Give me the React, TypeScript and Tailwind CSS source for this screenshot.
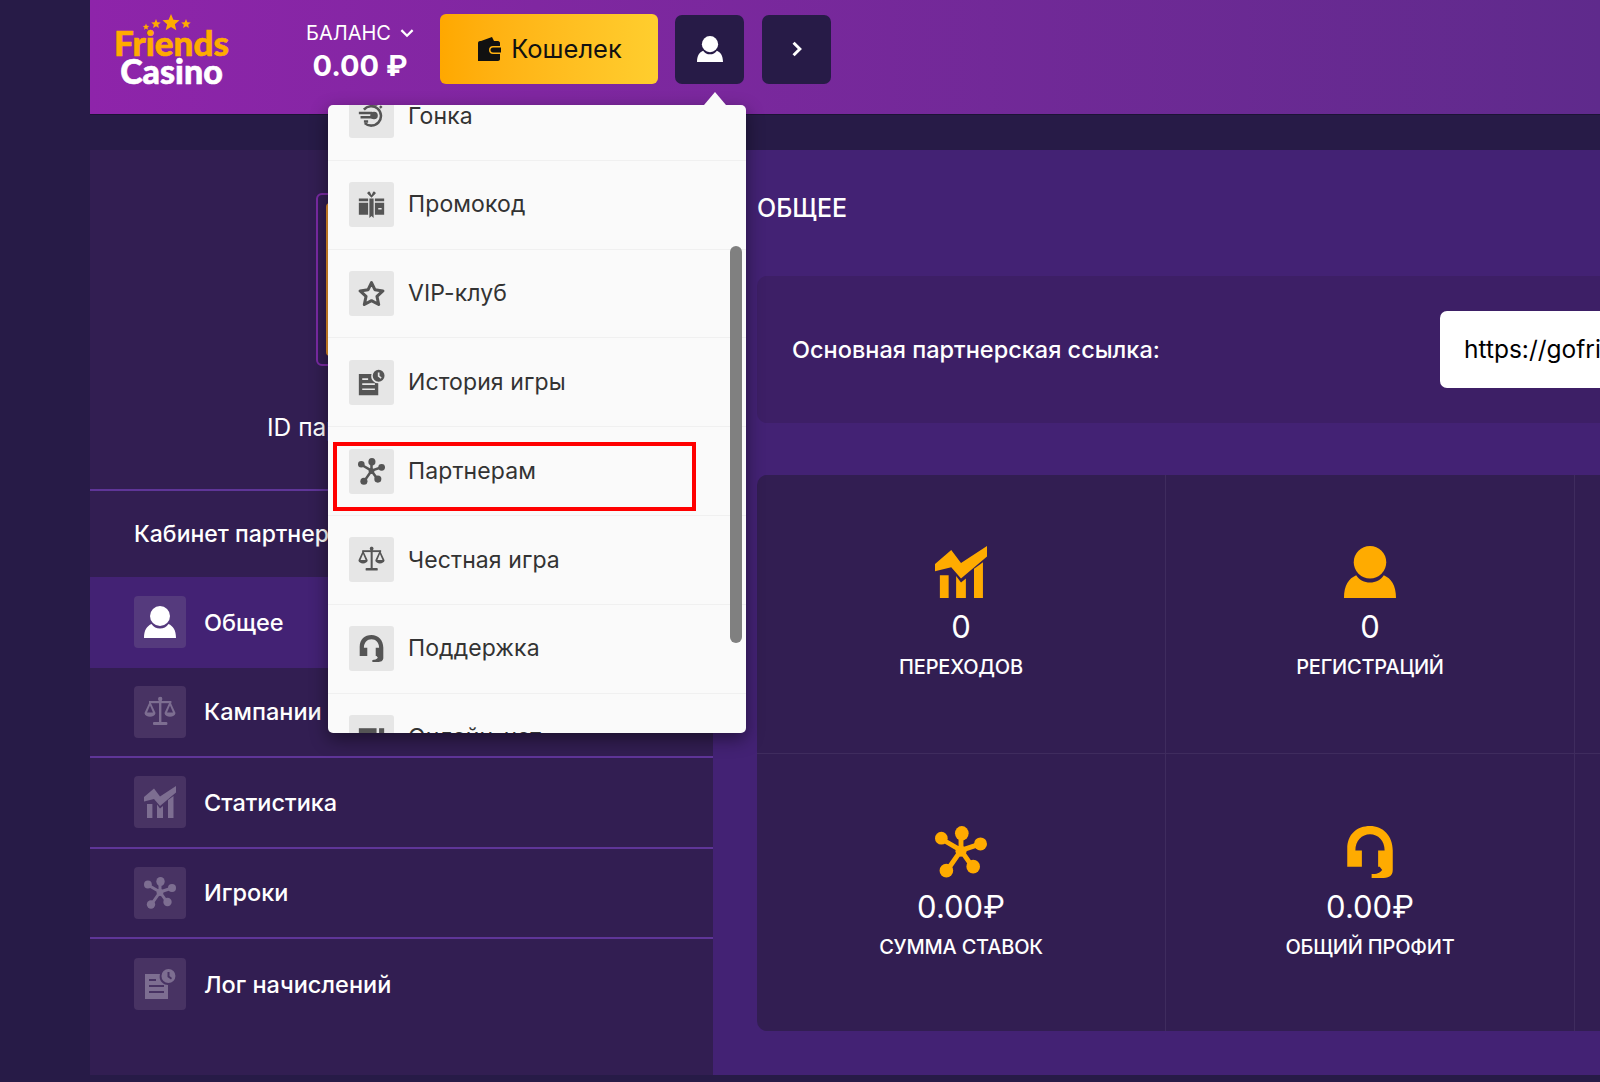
import React from "react";

const F = '"Inter","Liberation Sans",sans-serif';
const LOGO = '"Lato",sans-serif';

function Chart({ className = "" }: { className?: string }) {
  return (
    <svg viewBox="0 0 32 32" className={className} fill="currentColor">
      <path d="M0 15.5 L0 11 L10 2.5 L16 10.5 L32 0 L32 6.5 L16 20 L10 13 Z" />
      <rect x="3" y="18" width="5.4" height="14" />
      <path d="M13 18.5 L16 22.5 L19 20 L19 32 L13 32 Z" />
      <path d="M24 14 L29.5 10 L29.5 32 L24 32 Z" />
    </svg>
  );
}
function User({ className = "" }: { className?: string }) {
  return (
    <svg viewBox="0 0 32 32" className={className} fill="currentColor">
      <ellipse cx="16" cy="10" rx="10" ry="10" />
      <path d="M0 32 C0 24 3 20 7.5 18 C9.5 21 12.5 22.5 16 22.5 C19.5 22.5 22.5 21 24.5 18 C29 20 32 24 32 32 Z" />
    </svg>
  );
}
function Hub({ className = "" }: { className?: string }) {
  return (
    <svg viewBox="0 0 32 32" className={className} fill="currentColor" stroke="currentColor">
      <g strokeWidth="3">
        <path d="M16 15 L16 4 M16 15 L4 8 M16 15 L28 11 M16 15 L7 28 M16 15 L23 25" fill="none" />
      </g>
      <g stroke="none">
        <circle cx="16" cy="15.5" r="3.4" />
        <ellipse cx="16.5" cy="4.5" rx="4.2" ry="4.5" />
        <circle cx="3.9" cy="7.5" r="3.9" />
        <circle cx="28" cy="11" r="4" />
        <circle cx="7" cy="27.5" r="4.2" />
        <circle cx="23.5" cy="25" r="4.2" />
      </g>
    </svg>
  );
}
function Headset({ className = "" }: { className?: string }) {
  return (
    <svg viewBox="0 0 32 32" className={className} fill="currentColor">
      <path d="M2 25 L2 14 C2 5 8 0 16 0 C24 0 30 6 30 15 L30 27 C30 31 27 32 23 32 L17 32 L17 29.5 C20 29.5 22 29 23.5 27 L22 25 L21 25 L21 15 L25 15 C25 9 21 5 16 5 C11 5 7 9 7 15 L11 15 L11 25 Z" />
    </svg>
  );
}
function Scales({ className = "" }: { className?: string }) {
  return (
    <svg viewBox="0 0 32 32" className={className} fill="currentColor">
      <rect x="15" y="1" width="2.4" height="26" />
      <rect x="9" y="26" width="14.4" height="3" rx="1" />
      <rect x="5" y="5" width="22.4" height="2.2" />
      <circle cx="16.2" cy="3" r="2.2" />
      <path d="M0.5 17 L6 5 L11.5 17 C11 22 1 22 0.5 17 Z M3 16.5 L9 16.5 L6 9.5 Z" fillRule="evenodd" />
      <path d="M20.5 17 L26 5 L31.5 17 C31 22 21 22 20.5 17 Z M23 16.5 L29 16.5 L26 9.5 Z" fillRule="evenodd" />
    </svg>
  );
}
function LogDoc({ className = "" }: { className?: string }) {
  return (
    <svg viewBox="0 0 32 32" className={className} fill="currentColor">
      <path d="M1 6 L16 6 C15 10 16 14 21 16.5 L24 17 L24 31 L1 31 Z M5 11 L5 13 L12 13 L12 11 Z M5 17 L5 19 L20 19 L20 17 Z M5 23 L5 25 L20 25 L20 23 Z" fillRule="evenodd" />
      <path d="M24.5 1 A7 7 0 1 1 24.4 15 A7 7 0 1 1 24.5 1 Z M23.5 4 L23.5 9 L27 11.5 L28 10 L25.5 8 L25.5 4 Z" fillRule="evenodd" />
    </svg>
  );
}
function Gift({ className = "" }: { className?: string }) {
  return (
    <svg viewBox="0 0 32 32" className={className} fill="currentColor">
      <path d="M1 9 L12 9 L12 12 L1 12 Z M1 14 L12 14 L12 28 L1 28 Z M20 9 L31 9 L31 12 L20 12 Z M20 14 L31 14 L31 28 L20 28 Z M24 20 L24 22 L28 22 L28 20 Z" fillRule="evenodd" />
      <path d="M13.5 9 L18.5 9 L18.5 32 L16 29.5 L13.5 32 Z" />
      <path d="M16 8 L11 3 A2 2 0 0 1 14 1 L16 5 L18 1 A2 2 0 0 1 21 3 Z" />
    </svg>
  );
}
function Race({ className = "" }: { className?: string }) {
  return (
    <svg viewBox="0 0 32 32" className={className} fill="none" stroke="currentColor" strokeWidth="3">
      <path d="M7 9 A11.5 11.5 0 1 1 8 25" />
      <path d="M1 13 L17 13 M3 18 L17 18 M7 23 L12 23" />
      <circle cx="19" cy="16" r="3" fill="currentColor" />
      <path d="M15 3 L23 3 M26 5 L28 7" />
    </svg>
  );
}
function StarO({ className = "" }: { className?: string }) {
  return (
    <svg viewBox="0 0 32 32" className={className} fill="none" stroke="currentColor" strokeWidth="3.6" strokeLinejoin="round">
      <path d="M16 3 L20 11.5 L29.5 13 L22.5 19.5 L24.5 29 L16 24.5 L7.5 29 L9.5 19.5 L2.5 13 L12 11.5 Z" />
    </svg>
  );
}
function Chat({ className = "" }: { className?: string }) {
  return (
    <svg viewBox="0 0 32 32" className={className} fill="currentColor">
      <rect x="1" y="5" width="21" height="22" />
      <rect x="25" y="5" width="6" height="22" />
    </svg>
  );
}
function Wallet({ className = "" }: { className?: string }) {
  return (
    <svg viewBox="0 0 26 26" className={className} fill="currentColor">
      <path d="M5 5 L16 1 L18 5 Z" />
      <path d="M2 7 C2 5.8 3 5 4 5 L22 5 C23 5 24 6 24 7 L24 10 L17 10 C14.5 10 13 11.5 13 14 C13 16.5 14.5 18 17 18 L24 18 L24 23 C24 24 23 25 22 25 L2 25 Z" />
      <path d="M17 11.5 L25 11.5 L25 16.5 L17 16.5 C15.5 16.5 14.5 15.5 14.5 14 C14.5 12.5 15.5 11.5 17 11.5 Z" />
    </svg>
  );
}
function LogoStars({ className = "" }: { className?: string }) {
  const star = (cx: number, cy: number, r: number) => {
    const pts: string[] = [];
    for (let i = 0; i < 10; i++) {
      const a = -Math.PI / 2 + (i * Math.PI) / 5;
      const rr = i % 2 === 0 ? r : r * 0.45;
      pts.push(`${cx + rr * Math.cos(a)},${cy + rr * Math.sin(a)}`);
    }
    return <polygon key={`${cx}`} points={pts.join(" ")} />;
  };
  return (
    <svg viewBox="0 0 60 18" className={className} fill="currentColor">
      {star(4, 13, 3.4)}
      {star(14, 10, 5)}
      {star(29, 9, 9)}
      {star(44, 10, 5)}
    </svg>
  );
}

const menu = [
  { t: "Промокод", I: Gift },
  { t: "VIP-клуб", I: StarO },
  { t: "История игры", I: LogDoc },
  { t: "Партнерам", I: Hub },
  { t: "Честная игра", I: Scales },
  { t: "Поддержка", I: Headset },
];

function MenuRow({ t, I }: { t: string; I: React.ComponentType<{ className?: string }> }) {
  return (
    <div className="h-[88.8px] shrink-0 flex items-center pl-[21px] gap-[14px] border-b border-[#f0f0f0]">
      <div className="w-[45px] h-[45px] rounded-[3px] bg-[#e6e6e6] flex items-center justify-center text-[#555555]">
        <I className="w-[27px] h-[27px]" />
      </div>
      <span className="text-[23px] text-[#333333] tracking-[0.1px]">{t}</span>
    </div>
  );
}

function Side({ t, I, active, line }: { t: string; I: React.ComponentType<{ className?: string }>; active?: boolean; line?: boolean }) {
  return (
    <div className={`h-[90.5px] flex items-center pl-[44px] gap-[18px] ${active ? "bg-[#432274]" : ""} ${line ? "border-b-2 border-[#5f3598]" : ""}`}>
      <div className={`w-[52px] h-[52px] rounded-[4px] flex items-center justify-center ${active ? "bg-[#553a7d]" : "bg-[#483363]"}`}>
        <I className={`w-[32px] h-[32px] ${active ? "text-white" : "text-[#7d6e91]"}`} />
      </div>
      <span className="text-[23.5px] text-white font-medium">{t}</span>
    </div>
  );
}

function Stat({ I, v, l, low }: { I: React.ComponentType<{ className?: string }>; v: string; l: string; low?: boolean }) {
  return (
    <div className={`flex flex-col items-center ${low ? "pt-[72px]" : "pt-[71px]"}`}>
      <I className="w-[54px] h-[52px] text-[#ffab00]" />
      <div className={`${low ? "mt-[9px]" : "mt-[9px]"} text-[31px] leading-[40px] text-white`}>{v}</div>
      <div className={`${low ? "mt-[7px]" : "mt-[7px]"} text-[20px] leading-[26px] text-white font-medium tracking-[-0.2px]`}>{l}</div>
    </div>
  );
}

export default function App() {
  return (
    <div className="w-[1600px] h-[1082px] overflow-hidden relative flex bg-[#271b47]" style={{ fontFamily: F }}>
      <div className="w-[90px] shrink-0" />
      <div className="flex-1 min-w-0 flex flex-col">
        <header className="h-[115px] shrink-0 flex items-center pb-[16px] bg-gradient-to-r from-[#8e24aa] to-[#5f2a8c] border-b border-[#1c1436]">
          <div className="w-[113px] ml-[25px] flex flex-col items-center leading-none text-center">
            <LogoStars className="w-[60px] h-[18px] text-[#ffab00] -mb-[4px]" />
            <div className="text-[#ffab00] text-[35px] leading-[28px] [-webkit-text-stroke:0.6px_#ffab00]" style={{ fontFamily: LOGO, fontWeight: 900 }}>Friends</div>
            <div className="text-white text-[34px] leading-[29px] [-webkit-text-stroke:0.6px_#ffffff]" style={{ fontFamily: LOGO, fontWeight: 900 }}>Casino</div>
          </div>
          <div className="w-[112px] ml-[76px] pt-[4px] flex flex-col items-center text-white">
            <div className="flex items-center gap-[9px] text-[20px] leading-[28px]">
              БАЛАНС
              <svg viewBox="0 0 12 8" className="w-[14px] h-[9px]" fill="none" stroke="currentColor" strokeWidth="2">
                <path d="M1 1 L6 6 L11 1" />
              </svg>
            </div>
            <div className="mt-[2px] text-[29px] leading-[34px] font-bold whitespace-nowrap">0.00 ₽</div>
          </div>
          <div className="ml-[24px] w-[218px] h-[70px] rounded-[6px] bg-gradient-to-r from-[#ffa800] to-[#ffce2e] flex items-center justify-center gap-[9px] text-[#111111] text-[25.5px]">
            <Wallet className="w-[26px] h-[26px]" />
            Кошелек
          </div>
          <div className="ml-[17px] w-[69px] h-[69px] rounded-[7px] bg-[#271b47] flex items-center justify-center text-white">
            <User className="w-[26px] h-[26px]" />
          </div>
          <div className="ml-[18px] w-[69px] h-[69px] rounded-[7px] bg-[#271b47] flex items-center justify-center text-white">
            <svg viewBox="0 0 10 14" className="w-[12px] h-[16px]" fill="none" stroke="currentColor" strokeWidth="2.6">
              <path d="M2 1.5 L7.5 7 L2 12.5" />
            </svg>
          </div>
        </header>
        <div className="mt-[35px] h-[925px] flex">
          <aside className="w-[623px] shrink-0 bg-[#321e52] flex flex-col">
            <div className="h-[341px] shrink-0 border-b-2 border-[#5f3598] relative">
              <div className="absolute left-[226px] top-[43px] w-[120px] h-[173px] rounded-[6px] border-2 border-[#7b2aa5] p-[8px]">
                <div className="w-full h-full rounded-[4px] border-l-[3px] border-[#e8912b]" />
              </div>
              <div className="absolute left-[177px] top-[262px] text-[24.5px] leading-[30px] text-white whitespace-nowrap">ID партнера: 0</div>
            </div>
            <div className="h-[86px] shrink-0 flex items-center pl-[44px] text-[23px] text-white font-medium whitespace-nowrap">Кабинет партнера</div>
            <Side t="Общее" I={User} active />
            <Side t="Кампании" I={Scales} line />
            <Side t="Статистика" I={Chart} line />
            <Side t="Игроки" I={Hub} line />
            <Side t="Лог начислений" I={LogDoc} />
          </aside>
          <main className="flex-1 min-w-0 bg-[#432274] pl-[44px]">
            <div className="h-[126px] flex items-center pb-[8px] text-[25px] text-white font-medium">ОБЩЕЕ</div>
            <div className="h-[147px] rounded-l-[10px] bg-[#3d1f66] flex items-center pl-[35px]">
              <span className="w-[648px] shrink-0 text-[23.5px] text-white font-medium whitespace-nowrap">Основная партнерская ссылка:</span>
              <div className="flex-1 h-[77px] rounded-l-[7px] bg-white flex items-center pl-[24px] text-[24.5px] text-black overflow-hidden whitespace-nowrap">https://gofri</div>
            </div>
            <div className="mt-[52px] h-[556px] rounded-l-[10px] bg-[#321e52] grid grid-cols-[409px_409px_1fr] grid-rows-[279px_1fr]">
              <div className="border-r border-b border-[#3f2c5e] flex justify-center">
                <Stat I={Chart} v="0" l="ПЕРЕХОДОВ" />
              </div>
              <div className="border-r border-b border-[#3f2c5e] flex justify-center">
                <Stat I={User} v="0" l="РЕГИСТРАЦИЙ" />
              </div>
              <div className="border-b border-[#3f2c5e]" />
              <div className="border-r border-[#3f2c5e] flex justify-center">
                <Stat I={Hub} v="0.00₽" l="СУММА СТАВОК" low />
              </div>
              <div className="border-r border-[#3f2c5e] flex justify-center">
                <Stat I={Headset} v="0.00₽" l="ОБЩИЙ ПРОФИТ" low />
              </div>
              <div />
            </div>
          </main>
        </div>
      </div>

      {/* dropdown */}
      <div className="absolute left-[328px] top-[105px] w-[418px] h-[628px] rounded-[5px] bg-[#fafafa] overflow-hidden shadow-[0_6px_18px_rgba(0,0,0,0.45)]">
        <div className="flex flex-col -mt-[33px]">
          <MenuRow t="Гонка" I={Race} />
          {menu.map((m) => (
            <MenuRow key={m.t} t={m.t} I={m.I} />
          ))}
          <MenuRow t="Онлайн-чат" I={Chat} />
        </div>
        <div className="absolute right-[4px] top-[141px] w-[12px] h-[397px] rounded-full bg-[#808080]" />
      </div>
      <div className="absolute left-[704px] top-[92px] w-0 h-0 border-l-[11px] border-r-[11px] border-b-[13px] border-l-transparent border-r-transparent border-b-[#fafafa]" />
      {/* highlight */}
      <div className="absolute left-[333px] top-[442px] w-[363px] h-[69px] border-[4px] border-[#ff0000]" />
    </div>
  );
}
